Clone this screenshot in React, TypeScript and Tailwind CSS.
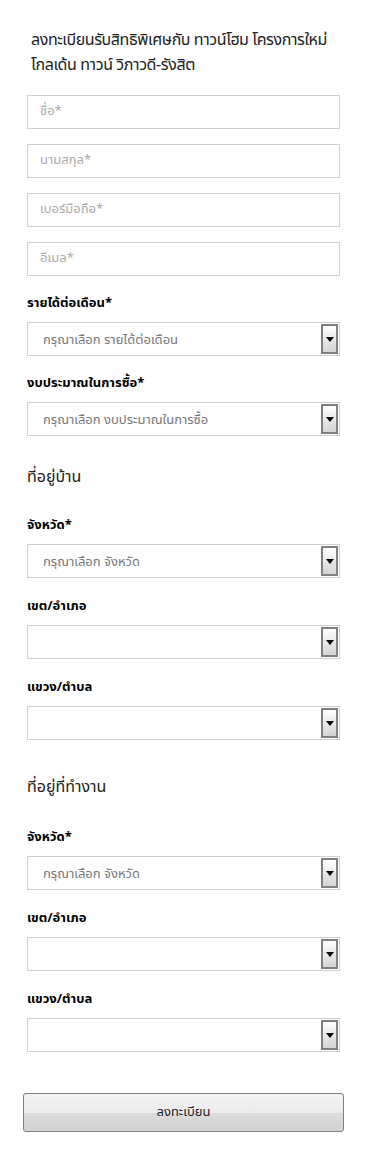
const font = { fontFamily: '"Noto Sans Thai", "Liberation Sans", "Noto Sans", sans-serif' }

function TextField({ placeholder }: { placeholder: string }) {
  return (
    <div className="h-[34px] w-full border border-[#cfcfcf] bg-white px-[12px] flex items-center text-[13px] text-[#aaaaaa]">
      {placeholder}
    </div>
  )
}

function SelectField({ label, value }: { label: string; value?: string }) {
  return (
    <div>
      <div className="text-[13px] font-bold text-black leading-[19px] mb-[9px]">{label}</div>
      <div className="flex h-[34px] w-full border border-[#cfcfcf] bg-white">
        <div className="flex-1 flex items-center pl-[15px] pt-[4px] text-[13px] text-[#777777]">{value}</div>
        <div className="w-[17px] my-[1px] mr-[1px] border-2 border-[#808080] bg-gradient-to-b from-white to-[#d4d4d4] flex items-center justify-center">
          <svg width="8" height="5" viewBox="0 0 8 5">
            <path d="M0 0h8L4 5z" fill="#000" />
          </svg>
        </div>
      </div>
    </div>
  )
}

export default function App() {
  return (
    <div className="w-[370px] min-h-[1149px] bg-white" style={font}>
      <div className="pl-[27px] pr-[30px] pt-[28px] pb-[17px]">
        <h1 className="pl-[4px] text-[16px] leading-[25px] tracking-[-0.4px] font-normal text-[#222222]">
          ลงทะเบียนรับสิทธิพิเศษกับ ทาวน์โฮม โครงการใหม่ โกลเด้น ทาวน์ วิภาวดี-รังสิต
        </h1>
        <div className="mt-[17px] flex flex-col gap-[15px]">
          <TextField placeholder="ชื่อ*" />
          <TextField placeholder="นามสกุล*" />
          <TextField placeholder="เบอร์มือถือ*" />
          <TextField placeholder="อีเมล*" />
        </div>
        <div className="mt-[18px] flex flex-col gap-[18px]">
          <SelectField label="รายได้ต่อเดือน*" value="กรุณาเลือก รายได้ต่อเดือน" />
          <SelectField label="งบประมาณในการซื้อ*" value="กรุณาเลือก งบประมาณในการซื้อ" />
        </div>
        <h2 className="mt-[30px] text-[16px] leading-[22px] font-normal text-[#222222]">ที่อยู่บ้าน</h2>
        <div className="mt-[28px] flex flex-col gap-[19px]">
          <SelectField label="จังหวัด*" value="กรุณาเลือก จังหวัด" />
          <SelectField label="เขต/อำเภอ" />
          <SelectField label="แขวง/ตำบล" />
        </div>
        <h2 className="mt-[36px] text-[16px] leading-[22px] font-normal text-[#222222]">ที่อยู่ที่ทำงาน</h2>
        <div className="mt-[30px] flex flex-col gap-[19px]">
          <SelectField label="จังหวัด*" value="กรุณาเลือก จังหวัด" />
          <SelectField label="เขต/อำเภอ" />
          <SelectField label="แขวง/ตำบล" />
        </div>
        <div className="-ml-[4px] mt-[41px]">
          <button className="h-[39px] w-[321px] rounded-[3px] border border-[#808080] bg-[linear-gradient(to_bottom,#f3f3f3_0%,#ececec_50%,#dcdcdc_52%,#d2d2d2_100%)] text-[13px] text-[#222222]">
            ลงทะเบียน
          </button>
        </div>
      </div>
    </div>
  )
}
